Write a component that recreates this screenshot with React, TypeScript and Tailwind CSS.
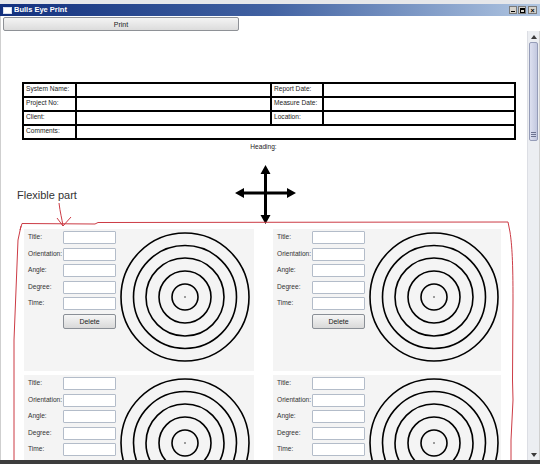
// Bulls Eye Print window: header table, "Heading:", move arrow and the flexible grid of target cards.
// The red hand-drawn outline + "Flexible part" note sit on top as an annotation layer.

const fields = ['Title:', 'Orientation:', 'Angle:', 'Degree:', 'Time:']

function Target() {
  return (
    <svg width="130" height="130" viewBox="0 0 130 130" className="ml-[4px] mt-[3px] shrink-0">
      {[64, 51.5, 39, 26, 13].map((r) => (
        <circle key={r} cx="65" cy="65" r={r} fill="none" stroke="#000" strokeWidth="1.6" />
      ))}
      <circle cx="65" cy="65" r="0.7" fill="#000" />
    </svg>
  )
}

function Card() {
  return (
    <div className="flex h-[142px] bg-[#f4f4f4]">
      <div className="flex w-[92px] shrink-0 flex-col gap-[3.5px] pl-[4px] pt-[2px]">
        {fields.map((f) => (
          <div key={f} className="flex h-[13px] items-center">
            <span className="w-[35px] shrink-0 text-[6.6px] leading-none text-[#333]">{f}</span>
            <div className="h-[13px] w-[53px] rounded-[1px] border border-[#b3bcc9] bg-white" />
          </div>
        ))}
        <button className="ml-[35px] h-[15px] w-[53px] rounded-[2px] border border-[#8a8f96] bg-linear-to-b from-[#f6f6f6] to-[#d9d9d9] text-[7px] leading-none text-[#222]">
          Delete
        </button>
      </div>
      <Target />
    </div>
  )
}

function LabelCell({ children }: { children: string }) {
  return (
    <td className="h-[14px] border-2 border-black p-0 pl-[2px] pt-[1px] align-top text-[6.6px] leading-[8px] text-[#222]">
      {children}
    </td>
  )
}

function ValueCell({ span }: { span?: number }) {
  return <td colSpan={span} className="h-[14px] border-2 border-black p-0" />
}

export default function App() {
  return (
    <div className="relative flex h-[464px] w-[540px] flex-col overflow-hidden bg-white font-['Liberation_Sans',Arial,sans-serif]">
      <div className="h-[4px] bg-[#e6e7ea]" />

      {/* title bar */}
      <div className="flex h-[12px] items-center bg-linear-to-r from-[#13307e] via-[#4262a2] to-[#b2c7e2]">
        <div className="ml-[3px] h-[7px] w-[9px] border border-[#d8e0f0] bg-white" />
        <span className="ml-[2px] text-[7.5px] font-bold leading-none text-white">Bulls Eye Print</span>
        <div className="ml-auto mr-[3px] flex gap-[1px]">
          <div className="flex h-[8px] w-[8px] items-end justify-center border border-[#7a7a7a] bg-[#d6d3cc] pb-[1px]">
            <div className="h-[1.5px] w-[4px] bg-black" />
          </div>
          <div className="flex h-[8px] w-[8px] items-center justify-center border border-[#7a7a7a] bg-[#d6d3cc]">
            <div className="h-[5px] w-[5px] border border-t-2 border-black" />
          </div>
          <div className="ml-[1px] flex h-[8px] w-[9px] items-center justify-center border border-[#7a7a7a] bg-[#d6d3cc] text-[7px] font-bold leading-none text-black">
            ×
          </div>
        </div>
      </div>

      {/* print row */}
      <div className="flex h-[15px] items-start shadow-[inset_1px_0_0_#cfcfcf]">
        <button className="ml-[3px] mt-[1px] h-[14px] w-[236px] rounded-[2px] border border-[#8e9196] bg-linear-to-b from-[#f4f4f4] to-[#dcdcdc] text-[7px] leading-none text-[#222]">
          Print
        </button>
      </div>

      <div className="flex flex-1 overflow-hidden shadow-[inset_1px_0_0_#cfcfcf]">
        {/* scrolling page */}
        <div className="w-[527px] shrink-0 overflow-hidden">
          <table className="ml-[22px] mt-[51px] w-[494px] table-fixed border-collapse border-2 border-black">
            <colgroup>
              <col className="w-[53px]" />
              <col className="w-[195px]" />
              <col className="w-[52px]" />
              <col />
            </colgroup>
            <tbody>
              <tr>
                <LabelCell>System Name:</LabelCell>
                <ValueCell />
                <LabelCell>Report Date:</LabelCell>
                <ValueCell />
              </tr>
              <tr>
                <LabelCell>Project No:</LabelCell>
                <ValueCell />
                <LabelCell>Measure Date:</LabelCell>
                <ValueCell />
              </tr>
              <tr>
                <LabelCell>Client:</LabelCell>
                <ValueCell />
                <LabelCell>Location:</LabelCell>
                <ValueCell />
              </tr>
              <tr>
                <LabelCell>Comments:</LabelCell>
                <ValueCell span={3} />
              </tr>
            </tbody>
          </table>

          <div className="mt-[2px] h-[10px] text-center text-[6.6px] leading-[10px] text-[#222]">Heading:</div>

          <div className="flex h-[77px]">
            <div className="w-[235px] shrink-0 pl-[17px] pt-[37px] text-[11px] leading-[13px] text-[#333]">
              Flexible part
            </div>
            <svg width="62" height="60" viewBox="0 0 62 60" className="mt-[13px]">
              <path d="M30.5 8 V51 M8 28 H53" stroke="#000" strokeWidth="3" />
              <path d="M30.5 0 L25.5 9 H35.5 Z M30.5 59 L25.5 50 H35.5 Z M0 28 L9 23 V33 Z M61 28 L52 23 V33 Z" fill="#000" />
            </svg>
          </div>

          <div className="ml-[24px] grid grid-cols-[230px_228px] gap-x-[19px] gap-y-[4px]">
            <Card />
            <Card />
            <Card />
            <Card />
          </div>
        </div>

        {/* scrollbar */}
        <div className="flex w-[12px] shrink-0 flex-col border-l border-[#dcdee4] bg-[#eceef2]">
          <div className="flex h-[11px] shrink-0 items-center justify-center">
            <svg width="6" height="4" viewBox="0 0 6 4">
              <path d="M3 0 L6 4 H0 Z" fill="#3a3a3a" />
            </svg>
          </div>
          <div className="mx-[1px] flex h-[99px] shrink-0 flex-col items-center justify-end gap-[1px] rounded-[2px] border border-[#959cb8] bg-linear-to-r from-[#dde0f0] to-[#c3c8df] pb-[3px]">
            <div className="h-[1px] w-[5px] bg-[#6d7390]" />
            <div className="h-[1px] w-[5px] bg-[#6d7390]" />
            <div className="h-[1px] w-[5px] bg-[#6d7390]" />
          </div>
          <div className="flex-1" />
          <div className="flex h-[11px] shrink-0 items-center justify-center">
            <svg width="6" height="4" viewBox="0 0 6 4">
              <path d="M0 0 H6 L3 4 Z" fill="#3a3a3a" />
            </svg>
          </div>
        </div>
        <div className="w-[1px] bg-[#d0d0d0]" />
      </div>

      <div className="h-[4px] bg-[#3d3d3d]" />

      {/* hand-drawn annotation */}
      <svg width="540" height="464" viewBox="0 0 540 464" className="pointer-events-none absolute left-0 top-0">
        <path
          d="M20 230 L22 223.5 L95 224 L98 222.5 L508 222 L510 232 C512 245 513 262 513 300 L512.5 380 L513 400 L511 440 L511 460"
          fill="none"
          stroke="#cc3b45"
          strokeWidth="1"
        />
        <path d="M21 226 L18 240 L16 290 L14 340 L14 460" fill="none" stroke="#cc3b45" strokeWidth="1" />
        <path d="M59 203 C60 212 62 219 63 226 M57 218 L63 226 L71 217" fill="none" stroke="#cc3b45" strokeWidth="1" />
      </svg>
    </div>
  )
}
